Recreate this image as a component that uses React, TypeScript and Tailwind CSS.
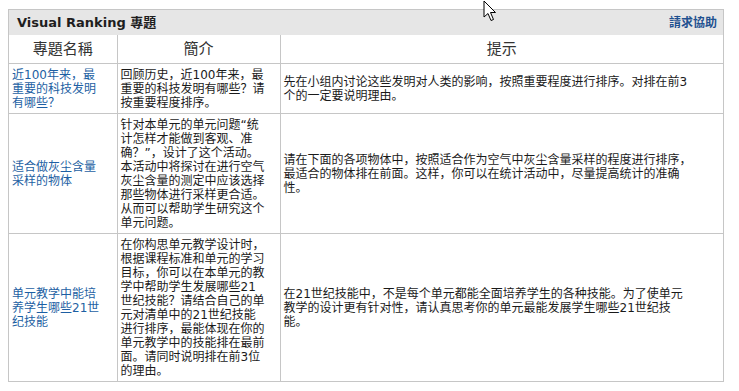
const rows = [
  {
    topic: ["近100年来，最", "重要的科技发明", "有哪些？"],
    intro: ["回顾历史，近100年来，最", "重要的科技发明有哪些？请", "按重要程度排序。"],
    hint: [
      "先在小组内讨论这些发明对人类的影响，按照重要程度进行排序。对排在前3",
      "个的一定要说明理由。",
    ],
  },
  {
    topic: ["适合做灰尘含量", "采样的物体"],
    intro: [
      "针对本单元的单元问题“统",
      "计怎样才能做到客观、准",
      "确？”，设计了这个活动。",
      "本活动中将探讨在进行空气",
      "灰尘含量的测定中应该选择",
      "那些物体进行采样更合适。",
      "从而可以帮助学生研究这个",
      "单元问题。",
    ],
    hint: [
      "请在下面的各项物体中，按照适合作为空气中灰尘含量采样的程度进行排序，",
      "最适合的物体排在前面。这样，你可以在统计活动中，尽量提高统计的准确",
      "性。",
    ],
  },
  {
    topic: ["单元教学中能培", "养学生哪些21世", "纪技能"],
    intro: [
      "在你构思单元教学设计时，",
      "根据课程标准和单元的学习",
      "目标，你可以在本单元的教",
      "学中帮助学生发展哪些21",
      "世纪技能？请结合自己的单",
      "元对清单中的21世纪技能",
      "进行排序，最能体现在你的",
      "单元教学中的技能排在最前",
      "面。请同时说明排在前3位",
      "的理由。",
    ],
    hint: [
      "在21世纪技能中，不是每个单元都能全面培养学生的各种技能。为了使单元",
      "教学的设计更有针对性，请认真思考你的单元最能发展学生哪些21世纪技",
      "能。",
    ],
  },
];

function Lines({ lines }: { lines: string[] }) {
  return (
    <>
      {lines.map((line) => (
        <div key={line} className="whitespace-nowrap">
          {line}
        </div>
      ))}
    </>
  );
}

export default function App() {
  return (
    <div
      className="relative min-h-[391px] bg-white pl-2 pt-[9px]"
      style={{ fontFamily: '"DejaVu Sans", "Noto Sans CJK SC", sans-serif' }}
    >
      <div className="w-[716px] border border-[#c6c6c6]">
        <div className="flex h-[25px] items-center justify-between bg-[#e6e6e6] pl-2 pr-[6px]">
          <span className="text-[13px] font-bold text-[#1e1e1e]">
            Visual Ranking 專題
          </span>
          <a href="#" className="text-[12px] font-bold text-[#1f5190]">
            請求協助
          </a>
        </div>
        <table className="w-full table-fixed border-collapse text-[12px] leading-[14px] text-[#1a1a1a]">
          <colgroup>
            <col className="w-[108px]" />
            <col className="w-[163px]" />
            <col />
          </colgroup>
          <thead>
            <tr className="h-[28px] text-[15px] leading-[20px] text-[#333]">
              <th className="border-r border-[#c6c6c6] font-normal">專題名稱</th>
              <th className="border-r border-[#c6c6c6] font-normal">簡介</th>
              <th className="font-normal">提示</th>
            </tr>
          </thead>
          <tbody>
            {rows.map((row) => (
              <tr key={row.topic[0]} className="border-t border-[#c6c6c6]">
                <td className="border-r border-[#c6c6c6] px-[3px] pt-[4px] pb-[3px] align-middle text-[#1d5fa3]">
                  <Lines lines={row.topic} />
                </td>
                <td className="border-r border-[#c6c6c6] px-[3px] pt-[4px] pb-[3px] align-top">
                  <Lines lines={row.intro} />
                </td>
                <td className="px-[3px] pt-[4px] pb-[3px] align-middle">
                  <Lines lines={row.hint} />
                </td>
              </tr>
            ))}
          </tbody>
        </table>
      </div>
      <svg
        className="absolute left-[483px] top-0"
        width="14"
        height="22"
        viewBox="0 0 14 22"
      >
        <path
          d="M1 1 L1 17 L5 13.5 L8 20.5 L10.5 19.5 L7.5 12.5 L12.5 12.5 Z"
          fill="white"
          stroke="black"
          strokeWidth="1"
          strokeLinejoin="miter"
        />
      </svg>
    </div>
  );
}
